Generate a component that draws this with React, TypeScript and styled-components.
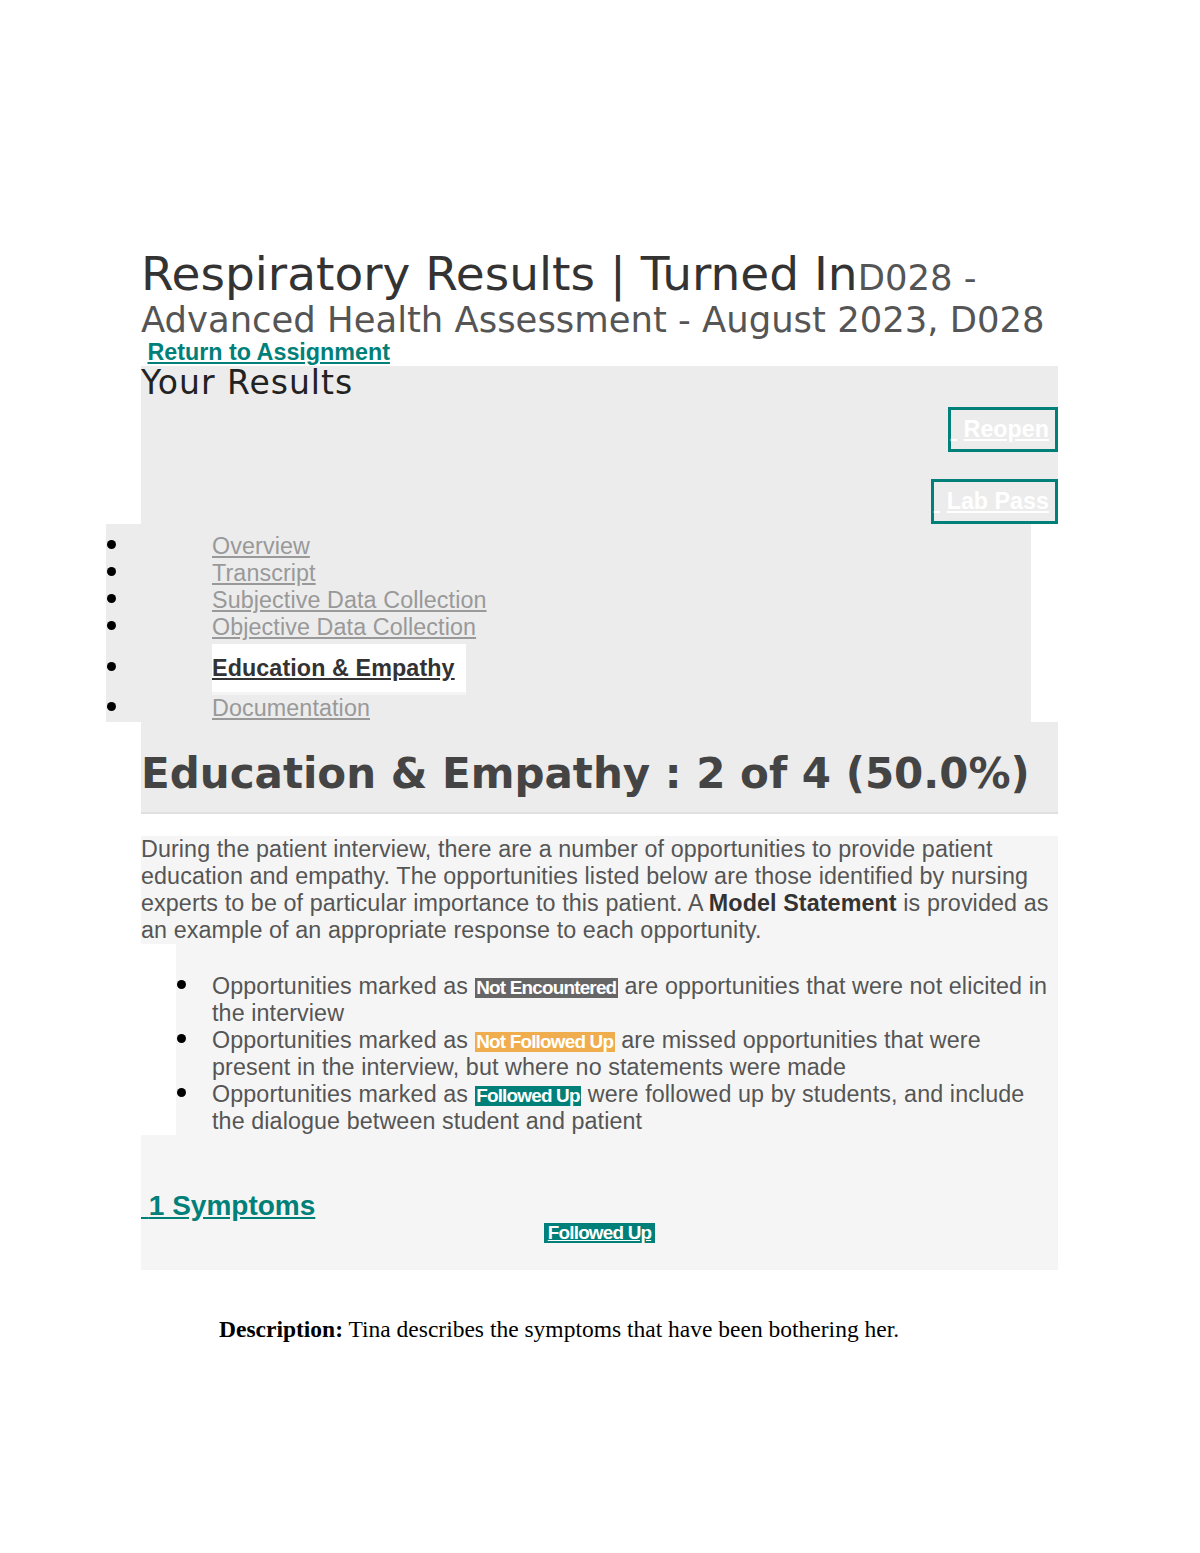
import React from 'react';
import styled, { createGlobalStyle } from 'styled-components';

const teal = '#008079';
const arial = '"Liberation Sans", Arial, sans-serif';
const verdana = '"DejaVu Sans", Verdana, sans-serif';

const GlobalStyle = createGlobalStyle`
  body {
    margin: 0;
    background: #fff;
  }
`;

const Page = styled.div`
  width: 917px;
  padding: 255px 0 160px 141px;
`;

const Title = styled.h1`
  margin: 0;
  font-family: ${verdana};
  font-weight: normal;
  font-size: 47px;
  line-height: 38px;
  color: #333;
`;

const Course = styled.span`
  font-size: 35.4px;
  color: #555;
`;

const BackRow = styled.div`
  font-family: ${arial};
  font-weight: bold;
  font-size: 23.3px;
  line-height: 26.5px;
`;

const TealLink = styled.a`
  color: ${teal};
  text-decoration: underline;
`;

const ResultsBox = styled.section`
  display: flex;
  flex-direction: column;
  background: #ececec;
`;

const ResultsHeading = styled.h2`
  margin: 0;
  font-family: ${verdana};
  font-weight: normal;
  font-size: 33px;
  letter-spacing: 1px;
  line-height: 34px;
  color: #222;
`;

const ActionButton = styled.a<{ $top: number }>`
  align-self: flex-end;
  margin-top: ${({ $top }) => $top}px;
  border: 3px solid ${teal};
  padding: 6.5px 6px 6.5px 0;
  font-family: ${arial};
  font-weight: bold;
  font-size: 23.3px;
  line-height: 26px;
  color: #fff;
  text-decoration: none;
  white-space: nowrap;
`;

const Underlined = styled.span`
  text-decoration: underline;
`;

const NavList = styled.ul`
  width: 925px;
  margin: 0 0 0 -35px;
  padding: 9.5px 0 0;
  list-style: none;
  background: #ececec;
`;

const Item = styled.li<{ $indent: number }>`
  padding-left: ${({ $indent }) => $indent}px;
  font-family: ${arial};
  font-size: 23.3px;
  letter-spacing: 0.1px;
  line-height: 27px;
`;

const NavItem = styled(Item)<{ $active?: boolean }>`
  margin-top: ${({ $active }) => ($active ? 3 : 0)}px;
`;

const Bullet = styled.span<{ $indent: number }>`
  display: inline-block;
  width: 9px;
  height: 9px;
  margin: 0 ${({ $indent }) => $indent - 10}px 5px ${({ $indent }) => 1 - $indent}px;
  border-radius: 50%;
  background: #000;
`;

const NavLink = styled.a<{ $active?: boolean }>`
  color: ${({ $active }) => ($active ? '#333' : '#999')};
  font-weight: ${({ $active }) => ($active ? 'bold' : 'normal')};
  text-decoration: underline;
  ${({ $active }) =>
    $active &&
    `
    display: inline-block;
    padding: 10.5px 11px 10.5px 0;
    background: #fff;
    border-bottom: 3px solid #f4f4f4;
  `}
`;

const ScoreBox = styled.div`
  padding: 27px 0 14px;
  background: #ececec;
  border-bottom: 2px solid #e0e0e0;
`;

const ScoreHeading = styled.h2`
  margin: 0;
  font-family: ${verdana};
  font-weight: bold;
  font-size: 42px;
  line-height: normal;
  color: #444;
`;

const Details = styled.section`
  margin-top: 22px;
`;

const Intro = styled.p`
  margin: 0;
  background: #f5f5f5;
  font-family: ${arial};
  font-size: 23.3px;
  letter-spacing: 0.1px;
  line-height: 27px;
  color: #555;

  strong {
    color: #333;
  }
`;

const LegendList = styled.ul`
  margin: 0 0 0 35px;
  padding: 28.5px 0 0;
  list-style: none;
  background: #f5f5f5;
  color: #555;
`;

const Badge = styled.span<{ $tone: 'gray' | 'orange' | 'teal'; $link?: boolean }>`
  display: inline-block;
  padding: 0 ${({ $link }) => ($link ? 4 : 1.5)}px;
  background: ${({ $tone }) =>
    $tone === 'gray' ? '#666' : $tone === 'orange' ? '#f0ad4e' : teal};
  font-family: ${arial};
  font-weight: bold;
  font-size: 18.9px;
  line-height: 20px;
  letter-spacing: -0.8px;
  color: #fff;
  text-decoration: ${({ $link }) => ($link ? 'underline' : 'none')};
`;

const Opportunity = styled.div`
  padding: 55px 0 26px;
  background: #f5f5f5;
`;

const OpportunityTitle = styled.h3`
  margin: 0;
  font-family: ${arial};
  font-weight: bold;
  font-size: 28px;
  line-height: 32px;
`;

const BadgeRow = styled.div`
  text-align: center;
  font-family: ${arial};
  font-size: 18.9px;
  line-height: 22px;
`;

const Description = styled.p`
  margin: 46px 0 0;
  padding-left: 78px;
  font-family: "Liberation Serif", "Times New Roman", serif;
  font-size: 23.5px;
  line-height: normal;
  color: #000;
`;

const navItems = [
  'Overview',
  'Transcript',
  'Subjective Data Collection',
  'Objective Data Collection',
  'Education & Empathy',
  'Documentation',
];

const ButtonLabel = ({ label }: { label: string }) => (
  <>
    <Underlined>{'\u00a0'}</Underlined>
    {'\u00a0'}
    <Underlined>{label}</Underlined>
  </>
);

const App = () => {
  return (
    <>
      <GlobalStyle />
      <Page>
        <Title>
          Respiratory Results | Turned In
          <Course>D028 - Advanced Health Assessment - August 2023, D028</Course>
        </Title>
        <BackRow>
          {'\u00a0'}
          <TealLink href="#">Return to Assignment</TealLink>
        </BackRow>

        <ResultsBox>
          <ResultsHeading>Your Results</ResultsHeading>
          <ActionButton href="#" $top={7}>
            <ButtonLabel label="Reopen" />
          </ActionButton>
          <ActionButton href="#" $top={27}>
            <ButtonLabel label="Lab Pass" />
          </ActionButton>
        </ResultsBox>

        <NavList>
          {navItems.map((item) => {
            const active = item === 'Education & Empathy';
            return (
              <NavItem key={item} $indent={106} $active={active}>
                <Bullet $indent={106} />
                <NavLink href="#" $active={active}>
                  {item}
                </NavLink>
              </NavItem>
            );
          })}
        </NavList>

        <ScoreBox>
          <ScoreHeading>Education &amp; Empathy : 2 of 4 (50.0%)</ScoreHeading>
        </ScoreBox>

        <Details>
          <Intro>
            During the patient interview, there are a number of opportunities to provide patient
            education and empathy. The opportunities listed below are those identified by nursing
            experts to be of particular importance to this patient. A <strong>Model Statement</strong> is
            provided as an example of an appropriate response to each opportunity.
          </Intro>
          <LegendList>
            <Item $indent={36}>
              <Bullet $indent={36} />
              Opportunities marked as <Badge $tone="gray">Not Encountered</Badge> are opportunities
              that were not elicited in the interview
            </Item>
            <Item $indent={36}>
              <Bullet $indent={36} />
              Opportunities marked as <Badge $tone="orange">Not Followed Up</Badge> are missed
              opportunities that were present in the interview, but where no statements were made
            </Item>
            <Item $indent={36}>
              <Bullet $indent={36} />
              Opportunities marked as <Badge $tone="teal">Followed Up</Badge> were followed up by
              students, and include the dialogue between student and patient
            </Item>
          </LegendList>
          <Opportunity>
            <OpportunityTitle>
              <TealLink href="#">{'\u00a0'}1 Symptoms</TealLink>
            </OpportunityTitle>
            <BadgeRow>
              <Badge $tone="teal" $link>
                Followed Up
              </Badge>
            </BadgeRow>
          </Opportunity>
          <Description>
            <strong>Description:</strong> Tina describes the symptoms that have been bothering her.
          </Description>
        </Details>
      </Page>
    </>
  );
};

export default App;
